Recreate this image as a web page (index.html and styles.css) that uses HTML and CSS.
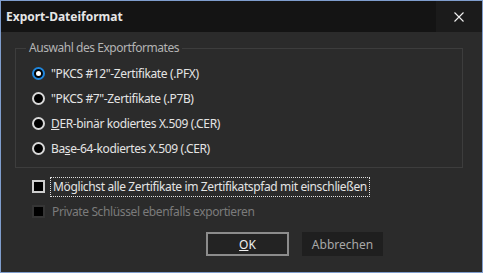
FILE: index.html
```html
<!DOCTYPE html>
<html lang="de">
<head>
<meta charset="utf-8">
<title>Export-Dateiformat</title>
<link rel="stylesheet" href="styles.css">
</head>
<body>
<div class="window">
  <div class="titlebar">
    <div class="title">Export-Dateiformat</div>
    <div class="close">
      <svg width="10" height="10" viewBox="0 0 10 10"><path d="M0.5 0.5L9.5 9.5M9.5 0.5L0.5 9.5" stroke="#f0f0f0" stroke-width="1.1" fill="none"/></svg>
    </div>
  </div>
  <div class="content">
    <fieldset class="group">
      <legend class="legend">Auswahl des Exportformates</legend>
      <div class="row"><span class="radio checked"></span><span class="label">"PKCS #12"-Zertifikate (.PFX)</span></div>
      <div class="row"><span class="radio"></span><span class="label">"PKCS #7"-Zertifikate (.P7B)</span></div>
      <div class="row"><span class="radio"></span><span class="label"><u>D</u>ER-binär kodiertes X.509 (.CER)</span></div>
      <div class="row"><span class="radio"></span><span class="label">Ba<u>s</u>e-64-kodiertes X.509 (.CER)</span></div>
    </fieldset>
    <div class="checks">
      <div class="row"><span class="check"></span><span class="label focus">Möglichst alle Zertifikate im Zertifikatspfad mit einschließen</span></div>
      <div class="row disabled"><span class="check"></span><span class="label">Private Schlüssel ebenfalls exportieren</span></div>
    </div>
    <div class="buttons">
      <div class="btn primary"><u>O</u>K</div>
      <div class="btn secondary">Abbrechen</div>
    </div>
  </div>
</div>
</body>
</html>
```
FILE: styles.css
```css
* { box-sizing: border-box; }
html, body { margin: 0; padding: 0; background: #2b2b2b; }
body { font-family: "Noto Sans", "Open Sans", sans-serif; font-size: 12px; }
.window {
  width: 483px; height: 273px;
  border: 1px solid #7f9dcd;
  background: #2b2b2b;
  display: flex; flex-direction: column;
}
.titlebar {
  height: 31px; background: #141414;
  display: flex; align-items: center; justify-content: space-between;
}
.title { color: #e6e6e6; font-weight: bold; padding-left: 5px; font-size: 12px; }
.close {
  width: 46px; height: 31px; background: #1b1b1b;
  display: flex; align-items: center; justify-content: center;
}
.content { display: flex; flex-direction: column; }
.group {
  margin: 8px 19px 0 14px;
  padding: 5px 0 6px 0;
  border: 1px solid #3d3d3d;
  min-width: 0;
}
.group .row { padding-left: 16px; }
.legend {
  color: #b4b4b4; padding: 0 3px; margin-left: 10px;
  line-height: 16px; letter-spacing: -0.45px;
}
.row { height: 25px; display: flex; align-items: center; }
.label { color: #e4e4e4; margin-left: 6px; white-space: nowrap; line-height: 16px; letter-spacing: -0.37px; }
.radio {
  width: 13px; height: 13px; border-radius: 50%;
  border: 2px solid #d8d8d8; background: #000;
  display: flex; align-items: center; justify-content: center;
  flex: none;
}
.radio.checked { border: 2.5px solid #1f86dd; }
.radio.checked::after {
  content: ""; width: 5px; height: 5px; border-radius: 50%; background: #fff;
}
.checks { margin: 6px 0 0 31px; }
.check {
  width: 13px; height: 13px; border: 2px solid #cfcfcf; background: #000; flex: none;
}
.checks .label { margin-left: 7px; }
.focus { outline: 1px dotted #e0e0e0; outline-offset: 1px; padding: 0 1px; }
.disabled .check { border-color: #353535; }
.disabled .label { color: #7b7b7b; }
.buttons { display: flex; justify-content: flex-end; gap: 13px; margin: 8px 99px 0 0; }
.btn {
  width: 83px; height: 24px; display: flex; align-items: center; justify-content: center;
}
.primary { border: 2px solid #8c8c8c; background: #232323; color: #f0f0f0; width: 83px; }
.secondary { background: #1f1f1f; color: #a8a8a8; width: 81px; }
```
